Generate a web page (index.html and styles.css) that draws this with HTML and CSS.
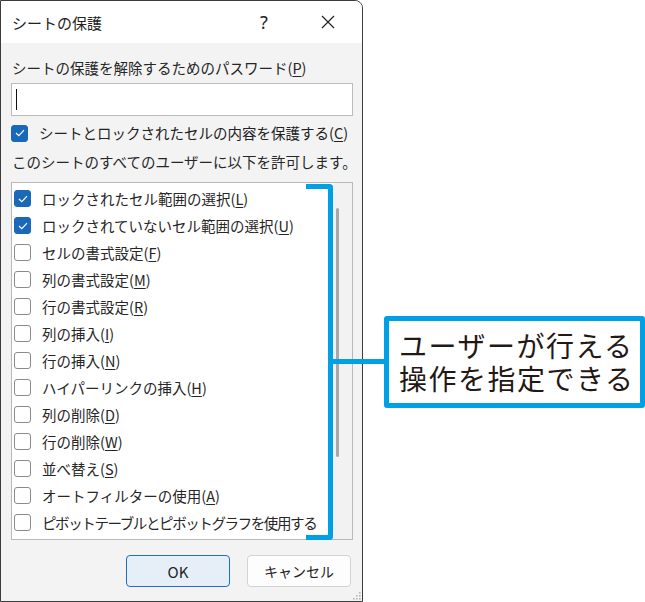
FILE: index.html
```html
<!DOCTYPE html>
<html lang="ja">
<head>
<meta charset="utf-8">
<link rel="stylesheet" href="styles.css">
</head>
<body>
<div class="page">
  <div class="dialog">
    <div class="titlebar">
      <span class="title">シートの保護</span>
      <span class="help">?</span>
      <span class="close">
        <svg width="14" height="14" viewBox="0 0 14 14"><path d="M1 1 L13 13 M13 1 L1 13" stroke="#222" stroke-width="1.2" fill="none"/></svg>
      </span>
    </div>
    <div class="body">
      <div class="label">シートの保護を解除するためのパスワード(<u>P</u>)</div>
      <div class="input"><span class="caret"></span></div>
      <div class="check-row main-check">
        <span class="cb on"><svg width="10" height="8" viewBox="0 0 10 8"><path d="M1 4 L3.8 6.6 L9 1.2" stroke="#fff" stroke-width="1.2" fill="none"/></svg></span>
        <span>シートとロックされたセルの内容を保護する(<u>C</u>)</span>
      </div>
      <div class="label allow">このシートのすべてのユーザーに以下を許可します。</div>
      <div class="list">
        <div class="items">
          <div class="item"><span class="cb on"><svg width="10" height="8" viewBox="0 0 10 8"><path d="M1 4 L3.8 6.6 L9 1.2" stroke="#fff" stroke-width="1.2" fill="none"/></svg></span><span>ロックされたセル範囲の選択(<u>L</u>)</span></div>
          <div class="item"><span class="cb on"><svg width="10" height="8" viewBox="0 0 10 8"><path d="M1 4 L3.8 6.6 L9 1.2" stroke="#fff" stroke-width="1.2" fill="none"/></svg></span><span>ロックされていないセル範囲の選択(<u>U</u>)</span></div>
          <div class="item"><span class="cb"></span><span>セルの書式設定(<u>F</u>)</span></div>
          <div class="item"><span class="cb"></span><span>列の書式設定(<u>M</u>)</span></div>
          <div class="item"><span class="cb"></span><span>行の書式設定(<u>R</u>)</span></div>
          <div class="item"><span class="cb"></span><span>列の挿入(<u>I</u>)</span></div>
          <div class="item"><span class="cb"></span><span>行の挿入(<u>N</u>)</span></div>
          <div class="item"><span class="cb"></span><span>ハイパーリンクの挿入(<u>H</u>)</span></div>
          <div class="item"><span class="cb"></span><span>列の削除(<u>D</u>)</span></div>
          <div class="item"><span class="cb"></span><span>行の削除(<u>W</u>)</span></div>
          <div class="item"><span class="cb"></span><span>並べ替え(<u>S</u>)</span></div>
          <div class="item"><span class="cb"></span><span>オートフィルターの使用(<u>A</u>)</span></div>
          <div class="item"><span class="cb"></span><span class="tight">ピボットテーブルとピボットグラフを使用する</span></div>
        </div>
        <div class="scrollbar"><div class="thumb"></div></div>
      </div>
      <div class="buttons">
        <button class="btn primary">OK</button>
        <button class="btn">キャンセル</button>
      </div>
    </div>
    <svg class="grip" width="10" height="10" viewBox="0 0 10 10">
      <g fill="#b8b8b8">
        <rect x="8" y="2" width="1.6" height="1.6"/>
        <rect x="5" y="5" width="1.6" height="1.6"/><rect x="8" y="5" width="1.6" height="1.6"/>
        <rect x="2" y="8" width="1.6" height="1.6"/><rect x="5" y="8" width="1.6" height="1.6"/><rect x="8" y="8" width="1.6" height="1.6"/>
      </g>
    </svg>
  </div>
  <div class="bracket"></div>
  <div class="connector"></div>
  <div class="callout">
    <div class="callout-line">ユーザーが行える</div>
    <div class="callout-line">操作を指定できる</div>
  </div>
</div>
</body>
</html>
```
FILE: styles.css
```css
html, body {
  margin: 0;
  padding: 0;
  background: #ffffff;
}
body {
  font-family: "Noto Sans CJK JP", "Noto Sans", sans-serif;
  color: #222;
}
.page {
  position: relative;
  width: 645px;
  height: 602px;
  overflow: hidden;
}
.dialog {
  position: relative;
  width: 363px;
  height: 602px;
  box-sizing: border-box;
  border: 1px solid #3c3c3c;
  border-top-right-radius: 8px;
  background: #f3f3f3;
  display: flex;
  flex-direction: column;
  overflow: hidden;
}
.titlebar {
  height: 42px;
  background: #ffffff;
  display: flex;
  align-items: center;
  flex-shrink: 0;
}
.title {
  font-size: 15px;
  padding-left: 11px;
  color: #222;
  flex: 1;
}
.help {
  font-size: 18px;
  width: 20px;
  text-align: center;
  margin-right: 47px;
  color: #222;
  font-family: "Noto Sans", sans-serif;
}
.close {
  width: 14px;
  height: 14px;
  display: flex;
  margin-right: 27px;
}
.body {
  flex: 1;
  padding: 0 9px 0 10px;
  display: flex;
  flex-direction: column;
  font-size: 14.5px;
}
.label {
  margin-top: 15px;
  line-height: 20px;
  height: 20px;
  padding-left: 1px;
  color: #262626;
  white-space: nowrap;
}
u {
  text-decoration: underline;
  text-underline-offset: 2px;
}
.input {
  margin-top: 5px;
  height: 33px;
  box-sizing: border-box;
  border: 1px solid #bcbcbc;
  background: #fff;
  display: flex;
  align-items: center;
  padding-left: 4px;
}
.caret {
  width: 1px;
  height: 21px;
  background: #111;
}
.check-row {
  display: flex;
  align-items: center;
  gap: 11px;
  height: 20px;
  line-height: 20px;
  white-space: nowrap;
}
.main-check {
  margin-top: 7px;
}
.cb {
  width: 17px;
  height: 17px;
  box-sizing: border-box;
  border-radius: 3px;
  border: 1px solid #8b8b8b;
  background: #fff;
  display: flex;
  align-items: center;
  justify-content: center;
  flex-shrink: 0;
}
.cb.on {
  background: #1a68b8;
  border-color: #1a68b8;
}
.allow {
  margin-top: 9px;
}
.list {
  margin-top: 10px;
  height: 358px;
  box-sizing: border-box;
  border: 1px solid #b9b9b9;
  background: #fff;
  display: flex;
}
.items {
  flex: 1;
  padding-top: 2px;
  padding-left: 2px;
  overflow: hidden;
}
.item {
  height: 27px;
  display: flex;
  align-items: center;
  gap: 11px;
  white-space: nowrap;
  color: #262626;
}
.tight {
  letter-spacing: -1.4px;
}
.scrollbar {
  width: 19px;
  background: #f2f2f2;
  display: flex;
  justify-content: center;
  padding-top: 25px;
}
.thumb {
  width: 3px;
  height: 249px;
  background: #a8a8a8;
  border-radius: 2px;
  margin-right: 11px;
}
.buttons {
  display: flex;
  justify-content: flex-end;
  gap: 17px;
  margin-top: 15px;
  padding-right: 2px;
}
.btn {
  width: 104px;
  height: 32px;
  box-sizing: border-box;
  border: 1px solid #d3d3d3;
  border-radius: 4px;
  background: #fdfdfd;
  font-family: "Noto Sans CJK JP", "Noto Sans", sans-serif;
  font-size: 14px;
  color: #222;
  padding: 0;
}
.btn.primary {
  border: 1.5px solid #1f6fc0;
  background: #e6eff7;
  font-size: 15px;
}
.grip {
  position: absolute;
  right: 1px;
  bottom: 1px;
}
.bracket {
  position: absolute;
  left: 306px;
  top: 184px;
  width: 27px;
  height: 356px;
  box-sizing: border-box;
  border: 5px solid #00a0e6;
  border-left: none;
  border-radius: 0 4px 4px 0;
}
.connector {
  position: absolute;
  left: 333px;
  top: 359px;
  width: 52px;
  height: 5px;
  background: #00a0e6;
}
.callout {
  position: absolute;
  left: 384px;
  top: 316px;
  width: 261px;
  height: 92px;
  box-sizing: border-box;
  border: 5px solid #00a0e6;
  border-radius: 3px;
  background: #fff;
  padding: 8px 0 0 10px;
  font-size: 28px;
  letter-spacing: 1.5px;
  color: #231815;
  white-space: nowrap;
}
.callout-line {
  height: 33px;
  line-height: 33px;
}
```
